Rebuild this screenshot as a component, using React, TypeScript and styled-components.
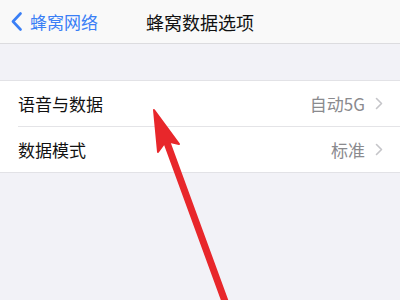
import React from 'react';
import styled, { createGlobalStyle } from 'styled-components';

const GlobalStyle = createGlobalStyle`
  html, body {
    margin: 0;
    padding: 0;
    background: #f2f2f7;
  }
  body {
    font-family: "Noto Sans CJK SC", "Liberation Sans", sans-serif;
  }
`;

const Screen = styled.div`
  position: relative;
  width: 400px;
  height: 300px;
  overflow: hidden;
  background: #f2f2f7;
`;

const NavBar = styled.div`
  height: 43px;
  background: #f9f9f9;
  border-bottom: 1px solid #dcdcdf;
  display: flex;
  align-items: center;
  position: relative;
`;

const BackBtn = styled.div`
  display: flex;
  align-items: center;
  gap: 8px;
  padding-left: 11px;
  color: #3a7ff6;
  font-size: 17px;
`;

const Title = styled.div`
  position: absolute;
  left: 0;
  right: 0;
  text-align: center;
  font-size: 18px;
  color: #111;
  pointer-events: none;
`;

const Spacer = styled.div`
  height: 36px;
  border-bottom: 1px solid #e2e2e6;
`;

const List = styled.div`
  background: #fff;
  border-bottom: 1px solid #e2e2e6;
`;

const Row = styled.div<{ $last?: boolean }>`
  height: 45px;
  margin-left: 18px;
  padding-right: 17px;
  display: flex;
  align-items: center;
  justify-content: space-between;
  border-bottom: ${(p) => (p.$last ? 'none' : '1px solid #e4e4e7')};
`;

const Label = styled.span`
  font-size: 17px;
  color: #111;
`;

const Detail = styled.span`
  display: flex;
  align-items: center;
  gap: 10px;
  font-size: 17px;
  color: #8a8a8e;
`;

const Arrow = styled.svg`
  position: absolute;
  left: 0;
  top: 0;
  pointer-events: none;
`;

const Chevron = () => (
  <svg width="8" height="13" viewBox="0 0 8 13">
    <path d="M1.5 1.5 L6.5 6.5 L1.5 11.5" fill="none" stroke="#c5c5c9" strokeWidth="1.6" strokeLinecap="round" strokeLinejoin="round" />
  </svg>
);

const App: React.FC = () => (
  <>
    <GlobalStyle />
    <Screen>
      <NavBar>
        <BackBtn>
          <svg width="11" height="19" viewBox="0 0 11 19">
            <path d="M9.5 1.5 L2 9.5 L9.5 17.5" fill="none" stroke="#3a7ff6" strokeWidth="2.6" strokeLinecap="round" strokeLinejoin="round" />
          </svg>
          蜂窝网络
        </BackBtn>
        <Title>蜂窝数据选项</Title>
      </NavBar>
      <Spacer />
      <List>
        <Row>
          <Label>语音与数据</Label>
          <Detail>
            自动5G
            <Chevron />
          </Detail>
        </Row>
        <Row $last>
          <Label>数据模式</Label>
          <Detail>
            标准
            <Chevron />
          </Detail>
        </Row>
      </List>
      <Arrow width="400" height="300" viewBox="0 0 400 300">
        <path d="M166 140 L226 304" stroke="#e8272b" strokeWidth="7" strokeLinecap="round" />
        <path d="M154 110 L179 144 L166 141 L158 152 Z" fill="#e8272b" stroke="#e8272b" strokeWidth="2" strokeLinejoin="round" />
      </Arrow>
    </Screen>
  </>
);

export default App;
